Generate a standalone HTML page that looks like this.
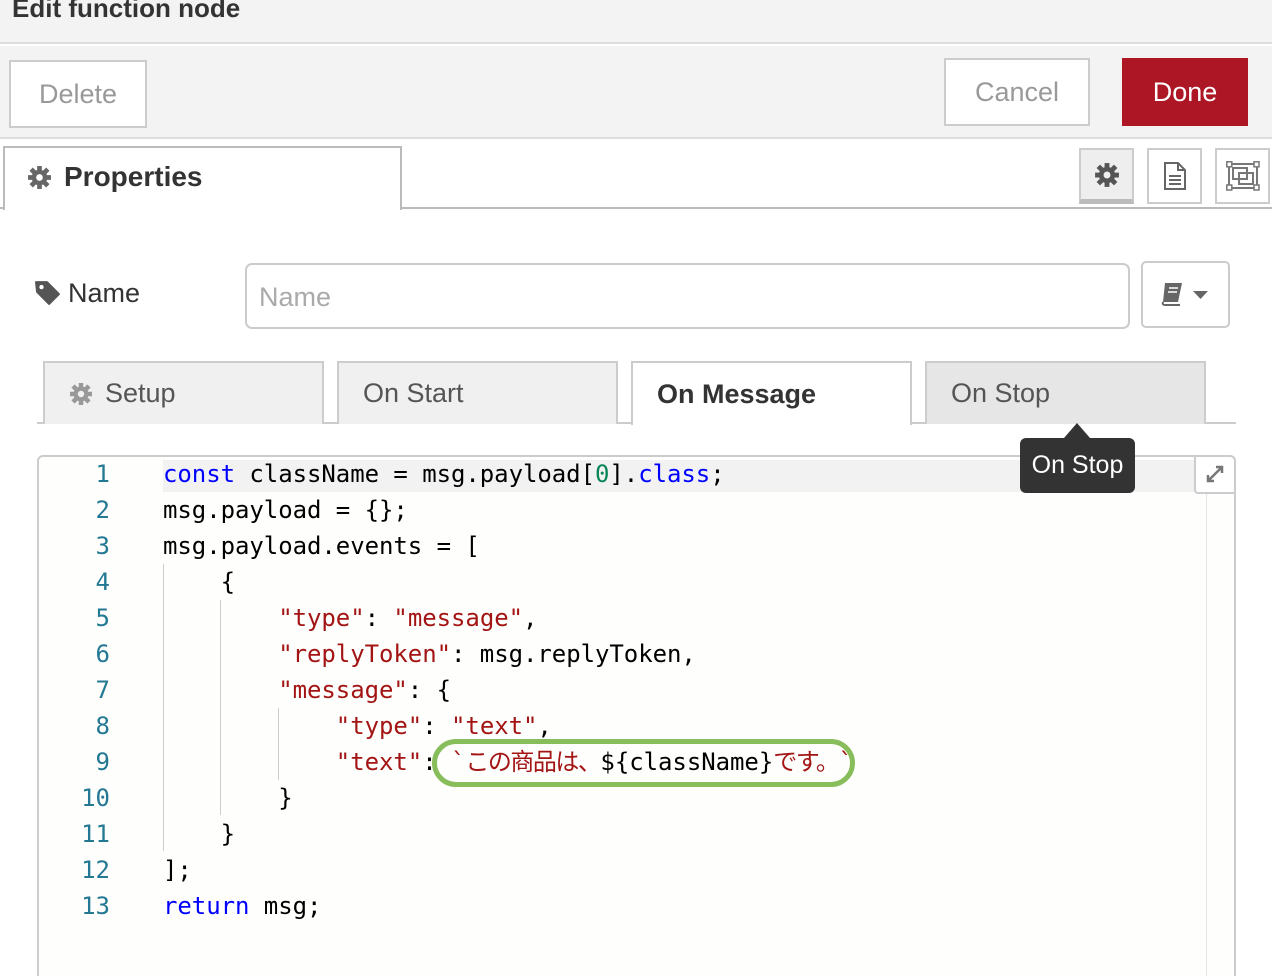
<!DOCTYPE html>
<html><head><meta charset="utf-8"><style>
*{box-sizing:border-box;margin:0;padding:0}
html{overflow:hidden;height:976px}
body{width:1272px;height:976px;overflow:hidden;background:#fff;font-family:"Liberation Sans",sans-serif;position:relative;color:#333}
.abs{position:absolute}
.btn{position:absolute;border:1px solid #ccc;background:#fff;color:#999;font-size:27px;display:flex;align-items:center;justify-content:center}
.tab{position:absolute;top:361px;height:63px;border:2px solid #ccc;border-bottom:none;background:#f0f0f0;color:#555;font-size:27px;display:flex;align-items:center}
.code{position:absolute;left:163px;font-family:"DejaVu Sans Mono","Liberation Mono",monospace;font-size:24px;white-space:pre;line-height:36px;color:#000;letter-spacing:-0.05px}
.ln{position:absolute;left:60px;width:50px;text-align:right;font-family:"DejaVu Sans Mono",monospace;font-size:24px;line-height:36px;color:#237893}
.k{color:#0000ff}.s{color:#a31515}.n{color:#098658}
.jp{letter-spacing:-1.5px}
.ib{position:absolute;top:148px;width:55px;height:56px;border:2px solid #ccc;background:#fff;display:flex;align-items:center;justify-content:center}
</style></head><body>
<div class="abs" style="left:0;top:0;width:1272px;height:44px;background:#f3f3f3;border-bottom:2px solid #ddd"></div>
<div class="abs" style="left:12px;top:-7px;font-size:26px;font-weight:bold;color:#333">Edit function node</div>
<div class="abs" style="left:0;top:46px;width:1272px;height:93px;background:#f3f3f3;border-bottom:2px solid #ddd"></div>
<div class="btn" style="left:9px;top:60px;width:138px;height:68px;border-width:2px">Delete</div>
<div class="btn" style="left:944px;top:58px;width:146px;height:68px;border-width:2px">Cancel</div>
<div class="btn" style="left:1122px;top:58px;width:126px;height:68px;background:#ad1625;border-color:#ad1625;color:#fff">Done</div>
<div class="abs" style="left:0;top:207px;width:1272px;height:2px;background:#bbb"></div>
<div class="abs" style="left:3px;top:146px;width:399px;height:64px;background:#fff;border:2px solid #bbb;border-bottom:none"></div>
<svg class="abs" style="left:27px;top:165px" width="25" height="25" viewBox="0 0 24 24"><g fill="#666"><circle cx="12" cy="12" r="7.5"/><g stroke="#666" stroke-width="4.5"><line x1="12" y1="1" x2="12" y2="23"/><line x1="1" y1="12" x2="23" y2="12"/><line x1="4" y1="4" x2="20" y2="20"/><line x1="20" y1="4" x2="4" y2="20"/></g></g><circle cx="12" cy="12" r="3.2" fill="#fff"/></svg>
<div class="abs" style="left:64px;top:161px;font-size:28px;font-weight:bold;color:#333">Properties</div>
<div class="ib" style="left:1079px;background:#eee;border-bottom:5px solid #bbb"><svg width="26" height="26" viewBox="0 0 24 24"><g fill="#555"><circle cx="12" cy="12" r="7.5"/><g stroke="#555" stroke-width="4.5"><line x1="12" y1="1" x2="12" y2="23"/><line x1="1" y1="12" x2="23" y2="12"/><line x1="4" y1="4" x2="20" y2="20"/><line x1="20" y1="4" x2="4" y2="20"/></g></g><circle cx="12" cy="12" r="3.2" fill="#eee"/></svg></div>
<div class="ib" style="left:1147px"><svg width="26" height="30" viewBox="0 0 26 30"><path d="M3 2h13l7 7v19H3z M16 2v7h7" fill="none" stroke="#666" stroke-width="2"/><path d="M7 15h12M7 19h12M7 23h12" stroke="#666" stroke-width="2"/></svg></div>
<div class="ib" style="left:1215px"><svg width="34" height="30" viewBox="0 0 34 30"><rect x="3" y="3" width="28" height="24" fill="none" stroke="#777" stroke-width="2"/><rect x="7" y="7" width="14" height="11" fill="none" stroke="#777" stroke-width="2"/><rect x="13" y="12" width="14" height="11" fill="none" stroke="#777" stroke-width="2"/><g fill="#fff" stroke="#777" stroke-width="1.5"><rect x="0.8" y="0.8" width="5" height="5"/><rect x="28" y="0.8" width="5" height="5"/><rect x="0.8" y="24" width="5" height="5"/><rect x="28" y="24" width="5" height="5"/></g></svg></div>
<svg class="abs" style="left:35px;top:280px" width="26" height="26" viewBox="0 0 24 24"><path d="M1 2h10l11 11-9 9L2 11z" fill="#555" stroke="#555" stroke-linejoin="round" stroke-width="2"/><circle cx="6" cy="6.5" r="2" fill="#fff"/></svg>
<div class="abs" style="left:68px;top:278px;font-size:27px;color:#333">Name</div>
<div class="abs" style="left:245px;top:263px;width:885px;height:66px;border:2px solid #ccc;border-radius:7px;font-size:27px;color:#aaa;padding:17px 0 0 12px">Name</div>
<div class="abs" style="left:1141px;top:261px;width:89px;height:67px;border:2px solid #ccc;border-radius:5px"></div>
<svg class="abs" style="left:1160px;top:281px" width="50" height="26" viewBox="0 0 50 26"><path d="M5 2h17l-4 19H3z" fill="#666"/><path d="M3 21q-1 3 2 3h15" fill="none" stroke="#666" stroke-width="2"/><path d="M9 7h9M8 11h9" stroke="#fff" stroke-width="1.5"/><path d="M33 10h15l-7.5 8z" fill="#666"/></svg>
<div class="abs" style="left:37px;top:422px;width:1199px;height:2px;background:#ccc"></div>
<div class="tab" style="left:43px;width:281px;padding-left:24px"><svg width="24" height="24" viewBox="0 0 24 24" style="margin-right:12px"><g fill="#999"><circle cx="12" cy="12" r="7.5"/><g stroke="#999" stroke-width="4.5"><line x1="12" y1="1" x2="12" y2="23"/><line x1="1" y1="12" x2="23" y2="12"/><line x1="4" y1="4" x2="20" y2="20"/><line x1="20" y1="4" x2="4" y2="20"/></g></g><circle cx="12" cy="12" r="3.2" fill="#f0f0f0"/></svg>Setup</div>
<div class="tab" style="left:337px;width:281px;padding-left:24px">On Start</div>
<div class="tab" style="left:631px;width:281px;padding-left:24px;background:#fff;color:#333;font-weight:bold;height:64px">On Message</div>
<div class="tab" style="left:925px;width:281px;padding-left:24px;background:#e6e6e6">On Stop</div>
<div class="abs" style="left:37px;top:455px;width:1199px;height:540px;border:2px solid #ccc;border-radius:6px;background:#fefefc"></div>
<div class="abs" style="left:163px;top:460px;width:1043px;height:32px;background:#f2f2f2"></div>
<div class="abs" style="left:1206px;top:456px;width:1px;height:520px;background:#e4e4e4"></div>
<div class="abs" style="left:1194px;top:455px;width:42px;height:39px;border:2px solid #ccc;background:#fff;border-radius:0 6px 0 4px"></div>
<svg class="abs" style="left:1204px;top:463px" width="22" height="22" viewBox="0 0 22 22"><path d="M4 18L18 4M12 4h6v6M4 12v6h6" fill="none" stroke="#777" stroke-width="2.5"/></svg>
<div class="abs" style="left:163px;top:564px;width:1px;height:287px;background:#ccc"></div>
<div class="abs" style="left:220px;top:600px;width:1px;height:215px;background:#ccc"></div>
<div class="abs" style="left:278px;top:708px;width:1px;height:72px;background:#ccc"></div>
<div class="ln" style="top:456px">1<br>2<br>3<br>4<br>5<br>6<br>7<br>8<br>9<br>10<br>11<br>12<br>13</div>
<div class="code" style="top:456px"><span class="k">const</span> className = msg.payload[<span class="n">0</span>].<span class="k">class</span>;
msg.payload = {};
msg.payload.events = [
    {
        <span class="s">"type"</span>: <span class="s">"message"</span>,
        <span class="s">"replyToken"</span>: msg.replyToken,
        <span class="s">"message"</span>: {
            <span class="s">"type"</span>: <span class="s">"text"</span>,
            <span class="s">"text"</span>: <span class="s">`<span class="jp">この商品は、</span></span>${className}<span class="s"><span class="jp">です。</span>`</span>
        }
    }
];
<span class="k">return</span> msg;</div>
<div class="abs" style="left:432px;top:739px;width:423px;height:48px;border:5px solid #7ab648;border-radius:24px;opacity:.9"></div>
<div class="abs" style="left:1020px;top:438px;width:115px;height:55px;background:#333;border-radius:6px;color:#fff;font-size:25px;display:flex;align-items:center;justify-content:center">On Stop</div>
<div class="abs" style="left:1064px;top:423px;width:0;height:0;border-left:13px solid transparent;border-right:13px solid transparent;border-bottom:15px solid #333"></div>
</body></html>
